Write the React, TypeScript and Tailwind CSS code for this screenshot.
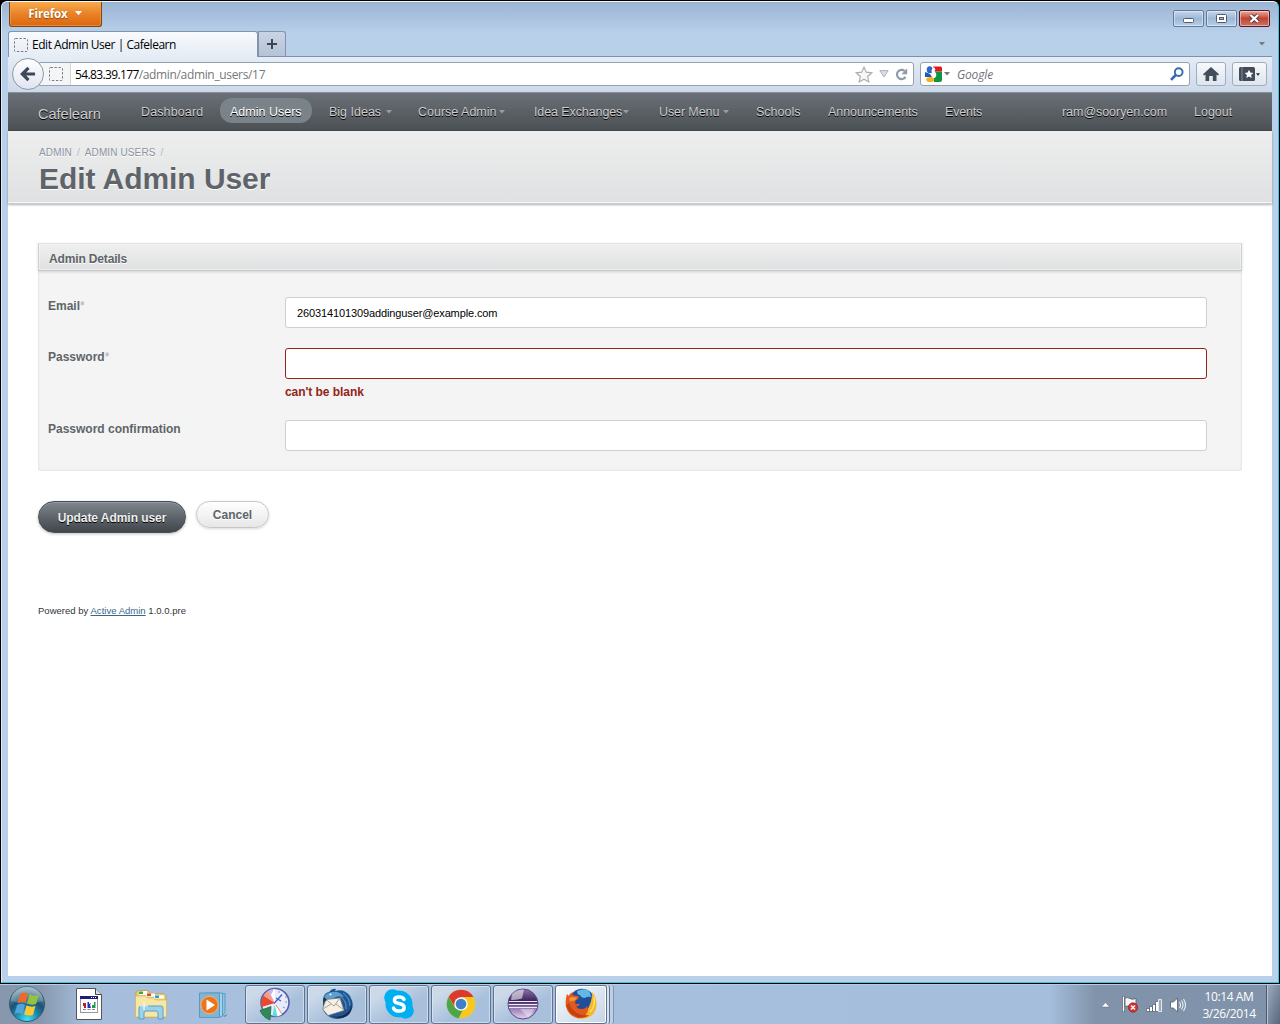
import React from 'react';

const ARIAL = "font-['Liberation_Sans',Arial,sans-serif]";
const SEGOE = "font-['Open_Sans','Noto_Sans',sans-serif]";

function BlankFavicon({ className = '' }: { className?: string }) {
  return (
    <svg className={'shrink-0 ' + className} width="14" height="14" viewBox="0 0 14 14" fill="none">
      <rect x=".5" y=".5" width="13" height="13" rx="1" stroke="#777c84" strokeDasharray="2.4 1.6" />
    </svg>
  );
}

function Caret({ className = '' }: { className?: string }) {
  return (
    <svg className={'shrink-0 ' + className} width="6" height="4" viewBox="0 0 6 4">
      <path d="M0 0h6L3 3.5z" fill="currentColor" />
    </svg>
  );
}

function TitleBar() {
  return (
    <div className="flex h-[29px] shrink-0 items-start justify-between pl-px pr-[2px]">
      <button className="flex h-[25px] w-[93px] items-center rounded-b-[3px] border border-t-0 border-[#7b451c] bg-linear-to-b from-[#f6ab4b] via-[#e98126] to-[#dc660f] pb-px pl-[18px] font-['Open_Sans',sans-serif] text-[11.5px] font-bold text-white shadow-[inset_0_0_0_1px_#f5a75188]">
        <span className="w-[40px] tracking-[-0.1px] [text-shadow:0_1px_1px_#8a4a10]">Firefox</span>
        <svg className="ml-[7px]" width="8" height="5" viewBox="0 0 8 5"><path d="M0 0h7L3.500 4.300z" fill="#fff" /></svg>
      </button>
      <div className="mt-[8px] flex gap-[2px]">
        <WindowButton><rect x="10.5" y="8.5" width="10" height="4" rx="1" fill="#fff" stroke="#525b6d" /></WindowButton>
        <WindowButton>
          <rect x="10.5" y="4.500" width="10" height="8" rx="1" fill="#fff" stroke="#525b6d" />
          <rect x="13.500" y="7.500" width="4" height="2" fill="#9fbbdb" stroke="#525b6d" />
        </WindowButton>
        <WindowButton close>
          <path d="M11.500 5l7.500 7M19 5l-7.500 7" stroke="#5c3a44" strokeWidth="4.200" />
          <path d="M11.500 5l7.500 7M19 5l-7.500 7" stroke="#fff" strokeWidth="2.300" />
        </WindowButton>
      </div>
    </div>
  );
}

function WindowButton({ children, close = false }: { children: React.ReactNode; close?: boolean }) {
  const look = close
    ? 'border-[#551b25] from-[#e8aaa0] from-0% via-[#c04430] via-50% to-[#cf7161] to-100%'
    : 'border-[#66789a] from-[#c5d7ec] from-0% via-[#9db8d6] via-50% to-[#b5cfea] to-100%';
  return (
    <div className={'h-[17px] w-[31px] rounded-[2px] border bg-linear-to-b shadow-[inset_0_0_0_1px_#ffffff70] ' + look}>
      <svg className="-mt-px -ml-px" width="31" height="17" viewBox="0 0 31 17" fill="none">{children}</svg>
    </div>
  );
}

function TabStrip() {
  return (
    <div className="flex h-[26px] shrink-0 items-end border-b border-[#7f90a8]">
      <div className={'z-10 -mb-px flex h-[26px] w-[250px] items-center rounded-t-[3px] border border-b-0 border-[#8293ab] bg-linear-to-b from-[#f8fafd] to-[#e5ecf5] pl-[5px] text-[12px] text-black ' + SEGOE}>
        <BlankFavicon />
        <span className="ml-[4px] whitespace-nowrap tracking-[-0.47px]">Edit Admin User | Cafelearn</span>
      </div>
      <div className="flex h-[25px] w-[28px] items-center justify-center rounded-tr-[3px] border border-b-0 border-[#8293ab] bg-linear-to-b from-[#c9d5e5] to-[#b5c3d6]">
        <svg width="10" height="10" viewBox="0 0 10 10"><path d="M5 0v10M0 5h10" stroke="#3c4650" strokeWidth="2" /></svg>
      </div>
      <Caret className="mb-[10px] ml-auto mr-[7px] text-[#77797d]" />
    </div>
  );
}

function ToolButton({ children, className = '' }: { children: React.ReactNode; className?: string }) {
  return (
    <div className={'flex h-[24px] items-center justify-center rounded-[3px] border border-[#a2acba] bg-linear-to-b from-[#f7f9fc] to-[#dde5ef] ' + className}>
      {children}
    </div>
  );
}

function NavBar() {
  return (
    <div className={'flex h-[36px] shrink-0 items-center bg-linear-to-b from-[#e5ecf5] to-[#ccd9ea] pb-[2px] pr-[5px] text-[12px] ' + SEGOE}>
      <div className="z-10 ml-[4px] flex size-[32px] shrink-0 items-center justify-center rounded-full border border-[#8e98a8] bg-linear-to-b from-white to-[#dfe5f0]">
        <svg width="16" height="16" viewBox="0 0 17 16" fill="none">
          <path d="M9 1.500L2.500 8 9 14.500M3 8h13" stroke="#3d4957" strokeWidth="3.400" />
        </svg>
      </div>
      <div className="-ml-[5px] flex h-[24px] w-[875px] items-center rounded-r-[3px] border border-[#95a0b0] bg-white">
        <div className="flex h-full w-[31px] shrink-0 items-center border-r border-[#d4d6da] bg-[#f4f5f7] pl-[9px]"><BlankFavicon /></div>
        <span className="ml-[4px] mt-[2px] tracking-[-0.63px] text-black">54.83.39.177</span>
        <span className="mt-[2px] tracking-[-0.34px] text-[#777]">/admin/admin_users/17</span>
        <div className="ml-auto mr-[5px] flex items-center gap-[6px]">
          <svg width="18" height="17" viewBox="0 0 18 17"><path d="M9 1.200l2.300 5 5.400.6-4 3.700 1.100 5.400L9 13.200l-4.800 2.700 1.100-5.400-4-3.700 5.400-.6z" fill="#f7f7f7" stroke="#aaadb2" strokeWidth="1.200" /></svg>
          <svg width="10" height="8" viewBox="0 0 10 8"><path d="M.8.600h8.400L5 7z" fill="#d9dee6" stroke="#aab0b9" /></svg>
          <svg width="13" height="13" viewBox="0 0 13 13" fill="none"><path d="M10.500 8.900A4.600 4.600 0 1 1 9.600 3" stroke="#909ba8" strokeWidth="2.200" /><path d="M12.200.300v5.900H6.400z" fill="#909ba8" /></svg>
        </div>
      </div>
      <div className="ml-[6px] flex h-[24px] w-[270px] items-center rounded-[3px] border border-[#95a0b0] bg-white pl-[4px] pr-[5px]">
        <svg width="17" height="17" viewBox="0 0 17 17">
          <path d="M8 .500h7.500q1.500 0 1.500 1.500v3.500H10z" fill="#ed1616" />
          <path d="M9 5.500h8V14q0 2-2 2H9z" fill="#109442" />
          <path d="M0 6l5 2 2 3H0z" fill="#2158bd" />
          <ellipse cx="4.700" cy="3.700" rx="3" ry="3.500" fill="#2a68c8" />
          <path d="M9.800 2.500q-3.500 2-1 4t0 5" fill="none" stroke="#fff" strokeWidth="2.600" />
          <ellipse cx="5.200" cy="13.500" rx="4" ry="2.600" fill="#f3b21c" />
        </svg>
        <Caret className="ml-[2px] text-[#777]" />
        <span className="ml-[7px] mt-[2px] italic tracking-[-0.15px] text-[#70737a]">Google</span>
        <svg className="ml-auto" width="14" height="14" viewBox="0 0 14 14" fill="none">
          <circle cx="8.700" cy="5.100" r="3.900" stroke="#356aad" strokeWidth="1.900" /><path d="M5.800 8L1 12.800" stroke="#356aad" strokeWidth="2.600" />
        </svg>
      </div>
      <ToolButton className="ml-[6px] w-[30px]">
        <svg width="16" height="14" viewBox="0 0 16 14"><path d="M8 0l8 7.300-1.200 1.100L13.500 7.500V14H9.800V9H6.200v5H2.500V7.500L1.200 8.400 0 7.300z" fill="#434d59" /></svg>
      </ToolButton>
      <ToolButton className="ml-[6px] w-[35px] gap-px">
        <svg width="16" height="14" viewBox="0 0 16 14"><rect width="16" height="14" rx="1.500" fill="#434d59" /><path d="M3 0v14" stroke="#7f8a97" /><path d="M10 2.800l1.300 2.800 3 .3-2.200 2 .6 3L10 9.400l-2.700 1.500.6-3-2.200-2 3-.3z" fill="#fff" /></svg>
        <svg width="4" height="3" viewBox="0 0 5 3"><path d="M0 0h5L2.500 3z" fill="#222" /></svg>
      </ToolButton>
    </div>
  );
}

const menu: { label: string; width: string; text?: string; caret?: string; active?: boolean }[] = [
  { label: 'Dashboard', width: 'w-[89px]', text: 'tracking-[0.12px]' },
  { label: 'Admin Users', width: 'w-[99px]', active: true },
  { label: 'Big Ideas', width: 'w-[89px]', caret: 'ml-[5px]' },
  { label: 'Course Admin', width: 'w-[116px]', caret: 'ml-[2px]' },
  { label: 'Idea Exchanges', width: 'w-[125px]', text: 'tracking-[-0.1px]', caret: 'ml-[1px]' },
  { label: 'User Menu', width: 'w-[97px]', text: 'tracking-[-0.1px]', caret: 'ml-[4px]' },
  { label: 'Schools', width: 'w-[72px]' },
  { label: 'Announcements', width: 'w-[117px]', text: 'tracking-[-0.05px]' },
  { label: 'Events', width: 'w-[117px]', text: 'tracking-[-0.2px]' },
  { label: 'ram@sooryen.com', width: 'w-[132px]', text: 'tracking-[-0.05px]' },
  { label: 'Logout', width: 'w-[60px]' },
];

function AdminHeader() {
  return (
    <header className="flex h-[39px] shrink-0 items-start border-t border-b border-t-[#8b8e92] border-b-[#44494d] bg-linear-to-b from-[#6a7077] to-[#4c5155] pl-[30px] text-[12.5px] text-[#cdcdcd] [text-shadow:0_1px_0_#000]">
      <span className="mt-[11px] w-[103px] text-[14.500px] leading-[20px]">Cafelearn</span>
      <nav className="mt-[5px] flex">
        {menu.map((m) => (
          <div key={m.label} className={'shrink-0 ' + m.width}>
            <a className={'inline-flex h-[25px] items-center whitespace-nowrap pt-[3px] ' + (m.active ? '-ml-[10px] rounded-[12px] bg-[#7b838a] px-[10px] text-white' : '')}>
              <span className={m.text}>{m.label}</span>
              {m.caret && <Caret className={'text-[#9a9d9f] ' + m.caret} />}
            </a>
          </div>
        ))}
      </nav>
    </header>
  );
}

function Field({ label, required, value = '', error, className = '' }: { label: string; required?: boolean; value?: string; error?: string; className?: string }) {
  return (
    <div className={'flex ' + className}>
      <label className="w-[237px] shrink-0 pt-[1px] text-[12px] font-bold leading-[16px] text-[#5e6469]">
        {label}{required && <span className="font-normal text-[#aaa]">*</span>}
      </label>
      <div>
        <div className={'flex h-[31px] w-[922px] items-center rounded-[3px] border bg-white pl-[11px] pt-[2px] text-[11px] tracking-[-0.12px] text-black ' + (error ? 'border-[#932419]' : 'border-[#c9d0d6]')}>{value}</div>
        {error && <p className="mt-[5px] text-[12px] font-bold leading-[16px] tracking-[-0.05px] text-[#932419]">{error}</p>}
      </div>
    </div>
  );
}

function AdminPage() {
  return (
    <div className={'-mt-px flex min-h-0 flex-1 flex-col bg-white ' + ARIAL}>
      <AdminHeader />
      <div className="h-[73px] shrink-0 border-b border-[#cdcdcd] bg-linear-to-b from-[#eeeeee] to-[#dfe1e2] pl-[31px] pt-[15px] shadow-[0_1px_2px_#00000050,inset_0_-1px_0_#f6f6f6]">
        <div className="flex gap-[5px] text-[10px] leading-[13px] text-[#8a949e] [text-shadow:0_1px_0_#fff]">
          <span className="tracking-[0.15px]">ADMIN</span><span className="text-[#aab2ba]">/</span>
          <span className="tracking-[0.12px]">ADMIN USERS</span><span className="text-[#aab2ba]">/</span>
        </div>
        <h1 className="mt-[2px] text-[30px] font-bold leading-[36px] tracking-[-0.06px] text-[#5e6469] [text-shadow:0_1px_0_#fff]">Edit Admin User</h1>
      </div>
      <main className="px-[30px] pt-[39px]">
        <section className="h-[228px] rounded-b-[3px] bg-[#f4f4f4] shadow-[inset_0_0_3px_#00000020]">
          <h3 className="h-[28px] border border-t-[#e0e0e0] border-x-[#d0d0d0] border-b-[#c8c8c8] bg-linear-to-b from-[#efefef] to-[#dfe1e2] pl-[10px] pt-[1px] text-[12px] font-bold leading-[28px] tracking-[-0.15px] text-[#5e6469] shadow-[0_1px_3px_#00000022,inset_0_0_0_1px_#ffffff60] [text-shadow:0_1px_0_#fff]">Admin Details</h3>
          <div className="pl-[10px] pt-[26px]">
            <Field label="Email" required value="260314101309addinguser@example.com" />
            <Field className="mt-[20px]" label="Password" required error="can't be blank" />
            <Field className="mt-[20px]" label="Password confirmation" />
          </div>
        </section>
        <div className="mt-[30px] flex items-start gap-[10px] text-[12px] font-bold">
          <button className="h-[32px] w-[148px] rounded-full border border-[#484e53] bg-linear-to-b from-[#80878e] to-[#40464a] pt-px tracking-[-0.05px] text-[#efefef] shadow-[0_1px_3px_#00000040,inset_0_1px_0_#ffffff30] [text-shadow:0_1px_0_#000]">Update Admin user</button>
          <button className="h-[27px] w-[73px] rounded-full border border-[#c7c7c7] bg-linear-to-b from-white to-[#e7e7e7] text-[#5e6469] shadow-[0_1px_3px_#00000028] [text-shadow:0_1px_0_#fff]">Cancel</button>
        </div>
        <footer className="mt-[71px] text-[9.500px] leading-[14px] tracking-[0.02px] text-[#323537]">
          Powered by <a className="text-[#38678b] underline">Active Admin</a> 1.0.0.pre
        </footer>
      </main>
    </div>
  );
}

function StartOrb() {
  return (
    <svg className="ml-[8px]" width="38" height="38" viewBox="0 0 38 38">
      <defs>
        <radialGradient id="orb" cx=".5" cy=".95" r=".95"><stop offset="0" stopColor="#40e4fb" /><stop offset=".35" stopColor="#1a86b0" /><stop offset=".6" stopColor="#1d5272" /><stop offset="1" stopColor="#9ab9c9" /></radialGradient>
      </defs>
      <circle cx="19" cy="19" r="17.500" fill="url(#orb)" stroke="#31576f" />
      <path d="M3 16a16 15 0 0 1 32 0q-16 5-32 0z" fill="#fff" opacity=".2" />
      <path d="M12 9q4-2.500 8-.3L17.500 18q-4-2-8 .2z" fill="#ed6b2a" />
      <path d="M21.500 9.500q4.500 2.200 9.500.2L28 19q-4.500 1.500-9-.5z" fill="#94c340" />
      <path d="M9 20q4-2.400 8-.3L14.500 29q-4-2-8 .3z" fill="#51a3da" />
      <path d="M18.500 20.500q4.500 2 9 .5L25 30q-4.500 1.500-9-.7z" fill="#fcc832" />
    </svg>
  );
}

function PixelFileIcon() {
  return (
    <svg width="26" height="32" viewBox="0 0 26 32">
      <path d="M.5.500h19l6 6v25H.500z" fill="#fff" stroke="#555" /><path d="M19.500.500v6h6" fill="#ddd" stroke="#444" />
      <rect x="4.500" y="8.500" width="17" height="16" fill="#fff" stroke="#999" /><rect x="4" y="8" width="18" height="3" fill="#1b1e7c" />
      <path d="M15 9.500h1m1 0h1m1 0h1" stroke="#fff" />
      <path d="M7 15h3v5H8v-2H7z" fill="#b81f2c" /><path d="M11.500 14h1.500v2l2-1-1 2 1 3h-3.500z" fill="#2030c0" /><path d="M18 14h1.500v6H16v-3h2z" fill="#249a44" /><path d="M7 21.500h3m1.500 0h3m1.500 0h3" stroke="#8a8a8a" />
    </svg>
  );
}

function FolderIcon() {
  return (
    <svg width="32" height="30" viewBox="0 0 32 30">
      <path d="M1 2l2-1.500h10l2 3h14l2 2V27H1z" fill="#e8cd74" stroke="#b99d4d" strokeWidth=".7" />
      <path d="M4 1h8v4H4z" fill="#fff" /><path d="M4 1.500h4v2.500H4z" fill="#3aa93c" /><path d="M11 3.500h9v3h-9z" fill="#fff" /><path d="M12 3.500h4v2.500h-4z" fill="#d94b35" />
      <path d="M19 5.500h10v3H19z" fill="#fff" /><path d="M20 5.500h4v2.500h-4z" fill="#2b9bdd" />
      <path d="M.500 6h10l2 2h6l2 2h11v17H.500z" fill="#f7e6a4" stroke="#cdb25d" strokeWidth=".6" />
      <path d="M4 29V18q0-2 2-2h20q2 0 2 2v11h-5v-6q0-2-2-2H11q-2 0-2 2v6z" fill="#9bd2eb" stroke="#5ba0c4" />
      <path d="M9 12v8M5 16h8" stroke="#fff" />
    </svg>
  );
}

function MediaIcon() {
  return (
    <svg width="30" height="27" viewBox="0 0 30 27">
      <path d="M24 24l5-2-3 3z" fill="#7389a3" /><path d="M10 1.500h16v19l-3 4H10z" fill="#8cc8e6" stroke="#4d93bb" strokeWidth=".8" /><path d="M6 1h17.500v23L21 25H6z" fill="#a0d3eb" stroke="#4d93bb" strokeWidth=".8" />
      <path d="M.500 1h20v24.500H.500z" fill="#84b4d4" stroke="#579bc4" />
      <circle cx="10.500" cy="13" r="8.700" fill="#ee741b" stroke="#fbc083" strokeWidth=".8" /><path d="M7.500 7.500l8.500 5.500-8.500 5.500z" fill="#fff" />
    </svg>
  );
}

function PieIcon() {
  return (
    <svg width="32" height="34" viewBox="0 0 32 34">
      <circle cx="16" cy="15.500" r="14" fill="#e6ecfa" stroke="#5a5fa8" strokeWidth="1.600" />
      <path d="M16 16L4.500 8.500Q1 14 2.500 20z" fill="#e8492f" /><path d="M16 16L4.500 8.500Q6.500 5.500 9 4z" fill="#f59a83" /><path d="M16 16L9 4q3-2 6-2.200z" fill="#ccb0e6" /><path d="M12 8l3-6h1v14z" fill="#fff" />
      <path d="M12 19.500L1 23.500q3 7 10 9.500z" fill="#2f8a58" stroke="#216a47" strokeWidth=".8" /><path d="M15.500 18l-2 11 5 .5z" fill="#5be0d9" /><path d="M16.500 18l6.500 9.500-4.500 2z" fill="#fff" /><path d="M17 18l6 9" stroke="#f28b67" />
      <path d="M15 16.500l8-9M17 11l5 3" stroke="#4c5cc4" strokeWidth="1.300" /><path d="M27 9v2M28 15h-2M26 21l-2-1M20 4v2" stroke="#8993c5" />
    </svg>
  );
}

function ThunderbirdIcon() {
  return (
    <svg width="32" height="32" viewBox="0 0 32 32">
      <path d="M2 11Q3 5 8 4q3-4 7-3l-1 2q9-3 15 5 5 9 1 15-4 7-13 8Q7 31 2 22z" fill="#1f5590" />
      <path d="M3 10q1-5 8-6 8-1 12 5-6-2-10 1l-4 3q-4-2-6-3z" fill="#5ba0d0" />
      <path d="M22 5q7 5 7 13M19 8q7 5 6 13" stroke="#4685bd" strokeWidth="1.500" fill="none" />
      <path d="M30 14q1 9-7 13-6 3-12 1 8 4 15 0 6-4 4-14z" fill="#15264f" />
      <path d="M5 11.500l14-1.500 4 12.500L7 27.500 1.500 21z" fill="#f5f0e6" stroke="#77756e" strokeWidth=".7" /><path d="M5 11.500l8 6.500 6-8M2 21l8-5M23 22l-8-6" fill="none" stroke="#aaa28f" />
      <circle cx="9.500" cy="6.500" r="1" fill="#fff" /><path d="M3 9l-1 5 4-2z" fill="#263442" />
    </svg>
  );
}

function SkypeIcon() {
  return (
    <svg width="30" height="30" viewBox="0 0 30 30">
      <circle cx="8.500" cy="8.500" r="8.300" fill="#00aff0" /><circle cx="21.500" cy="21.500" r="8.300" fill="#00aff0" /><circle cx="15" cy="15" r="13.500" fill="#00aff0" />
      <path d="M20 10.500Q19 8 15 8q-4.600 0-4.600 3.200 0 2.500 4.600 3.300 5.200.9 5.200 4 0 3.600-5.200 3.600-4.400 0-5.500-3" fill="none" stroke="#fff" strokeWidth="3.500" strokeLinecap="round" />
    </svg>
  );
}

function ChromeIcon() {
  return (
    <svg width="30" height="30" viewBox="0 0 30 30">
      <circle cx="15" cy="15" r="14.300" fill="#f8c91c" />
      <path d="M2.600 8A14.300 14.300 0 0 1 27.500 8H15L9 18z" fill="#dc3a2c" />
      <path d="M2.600 8l6.500 11 8 1.500-4.500 8.700A14.300 14.300 0 0 1 2.600 8z" fill="#4aa648" />
      <circle cx="15" cy="15" r="6.800" fill="#f5f5f5" /><circle cx="15" cy="15" r="5.300" fill="#3f7fc6" />
    </svg>
  );
}

function EclipseIcon() {
  return (
    <svg width="32" height="32" viewBox="0 0 32 32">
      <defs><linearGradient id="ecl" x2="0" y2="1"><stop offset="0" stopColor="#8d75ab" /><stop offset=".4" stopColor="#3b235a" /><stop offset=".6" stopColor="#8a70a9" /><stop offset="1" stopColor="#e6d3f2" /></linearGradient></defs>
      <circle cx="16" cy="16" r="15" fill="url(#ecl)" stroke="#5f4680" />
      <path d="M5 6Q10 1 17 1.500l-2 9Q8 12 4 12z" fill="#fff" opacity=".55" />
      <path d="M2 13.500h28M1.500 16.500h29M2 19.500h28" stroke="#eee9f4" strokeWidth="1" />
      <path d="M13 21h14q-2 6-6 8z" fill="#fff" opacity=".4" />
    </svg>
  );
}

function FirefoxIcon() {
  return (
    <svg width="32" height="32" viewBox="0 0 32 32">
      <circle cx="17" cy="13" r="12.300" fill="#1f4f9c" />
      <path d="M12 3q6-3 11-1 3 3 3 7-4-1-6 1-4 0-5-3-3 0-3-4z" fill="#62b9e4" />
      <path d="M27 4q5 5 4.500 14Q30 30 17 31q-6-2-4-6 10 0 12-9 2-4 2-12z" fill="#f7b72c" />
      <path d="M2 6q1 1 1.500 2Q5 5 8 4q-1 2 0 3.500 3-.5 6 1 0 2-3.500 4l-.5 3q2 1 5 0-1 3-4 3 2 3 6 2.500 4-.5 5-3 2 4 0 7-2 4-8 5.500Q4 29 1 19q-1-7 1-13z" fill="#e4591b" />
      <path d="M1.500 17q2 9 11 12 7 2 12-2-9 1-14-3Q5 20 4 15z" fill="#bf420f" />
      <path d="M4 10q4-2 8 0l-2 2.500-5 1z" fill="#f5933a" />
      <path d="M29 9q2 9-4 15" stroke="#fde36a" strokeWidth="1.500" fill="none" />
    </svg>
  );
}

const apps = [PieIcon, ThunderbirdIcon, SkypeIcon, ChromeIcon, EclipseIcon];

function Taskbar() {
  return (
    <div className="flex h-[40px] shrink-0 items-start border-t border-[#b9cbdd] bg-[linear-gradient(90deg,#8797ae_0,#8797ae_40px,#a5bddb_85px,#a8c0de_220px,#a5bedc_1050px,#8193aa_1095px,#8193aa_100%)]">
      <StartOrb />
      <div className="ml-[30px] mt-[3px] flex items-center"><PixelFileIcon /><div className="ml-[33px] mt-[2px]"><FolderIcon /></div><div className="ml-[32px] mt-[2px]"><MediaIcon /></div></div>
      <div className="ml-[16px] flex h-[39px] gap-[2px]">
        {apps.map((Icon, i) => (
          <div key={i} className="flex w-[60px] items-center justify-center rounded-[3px] border border-[#5f738d] bg-linear-to-br from-[#cbd9e9] from-20% to-[#a9c0dc] to-60% pb-[2px] shadow-[inset_0_0_0_1px_#e0eaf5aa]"><Icon /></div>
        ))}
        <div className="flex">
          <div className="flex w-[52px] items-center justify-center rounded-[3px] border border-[#5f738d] bg-linear-to-br from-[#f7f9fb] to-[#c4d4e7] pb-[2px] shadow-[inset_0_0_0_1px_#fff]"><FirefoxIcon /></div>
          <div className="w-[3px] rounded-r-[3px] border-r border-[#5f738d] bg-[#d7e2ee]" />
          <div className="w-[4px] rounded-r-[3px] border-r border-[#8095b0] bg-[#bdcfe3]" />
        </div>
      </div>
      <div className="ml-auto flex h-full items-center">
        <svg width="9" height="6" viewBox="0 0 9 6"><path d="M4.500.500l4 4.500h-8z" fill="#fff" stroke="#5b6878" strokeWidth=".5" /></svg>
        <svg className="ml-[12px]" width="16" height="17" viewBox="0 0 16 17">
          <path d="M1.500 0v16" stroke="#4f5b6b" strokeWidth="3" /><path d="M1.500.500v15" stroke="#fff" strokeWidth="1.500" /><path d="M3 2q3-1 5 .5t6 0v8q-3 1-6 0t-5 0z" fill="#f5f6f8" stroke="#4f5b6b" strokeWidth=".8" />
          <circle cx="11" cy="11.500" r="4.700" fill="#d8332b" stroke="#8d1614" strokeWidth=".6" /><path d="M9 9.500l4 4m0-4l-4 4" stroke="#fff" strokeWidth="1.500" />
        </svg>
        <svg className="ml-[8px]" width="16" height="14" viewBox="0 0 16 14"><path d="M.500 10.500h3v3h-3zM3.500 8.500h3v5h-3zM6.500 6.500h3v7h-3zM9.500 3.500h3v10h-3z" fill="#fff" stroke="#5b6878" strokeWidth=".8" /><path d="M12.500 1.500h3v12h-3z" fill="#9ca9b8" stroke="#e4e8ed" /></svg>
        <svg className="ml-[8px]" width="17" height="16" viewBox="0 0 17 16" fill="none"><path d="M.500 5h3L7.500 1v14l-4-4h-3z" fill="#fff" stroke="#4f5b6b" strokeWidth=".8" /><path d="M9.500 5q2 3 0 6M11.500 3.500q3 4.500 0 9M13.500 2q4 6 0 12" stroke="#eef1f5" strokeWidth="1.100" /></svg>
        <div className={'ml-[7px] w-[70px] text-center text-[12px] leading-[17px] tracking-[-0.4px] text-white ' + SEGOE}><div>10:14 AM</div><div>3/26/2014</div></div>
        <div className="ml-[2px] h-full w-[14px] border-l border-[#4c5a6c] bg-linear-to-br from-[#9dacbf] to-[#59687d] shadow-[inset_1px_0_0_#b9c4d2]" />
      </div>
    </div>
  );
}

export default function App() {
  return (
    <div className="flex h-[1024px] w-[1280px] flex-col overflow-hidden bg-black">
      <div className="mx-px mt-px flex h-[982px] shrink-0 flex-col overflow-hidden rounded-t-[6px] border-l border-t border-r border-b border-l-[#dfebf8] border-t-[#f3f7fb] border-r-[#38c5e8] border-b-[#38c5e8] bg-[linear-gradient(180deg,#9bb5d4_0,#b9d0ea_32px,#b9d0ea_100%)] px-[6px] pb-[6px]">
        <TitleBar />
        <TabStrip />
        <NavBar />
        <AdminPage />
      </div>
      <div className="h-px shrink-0" />
      <Taskbar />
    </div>
  );
}
